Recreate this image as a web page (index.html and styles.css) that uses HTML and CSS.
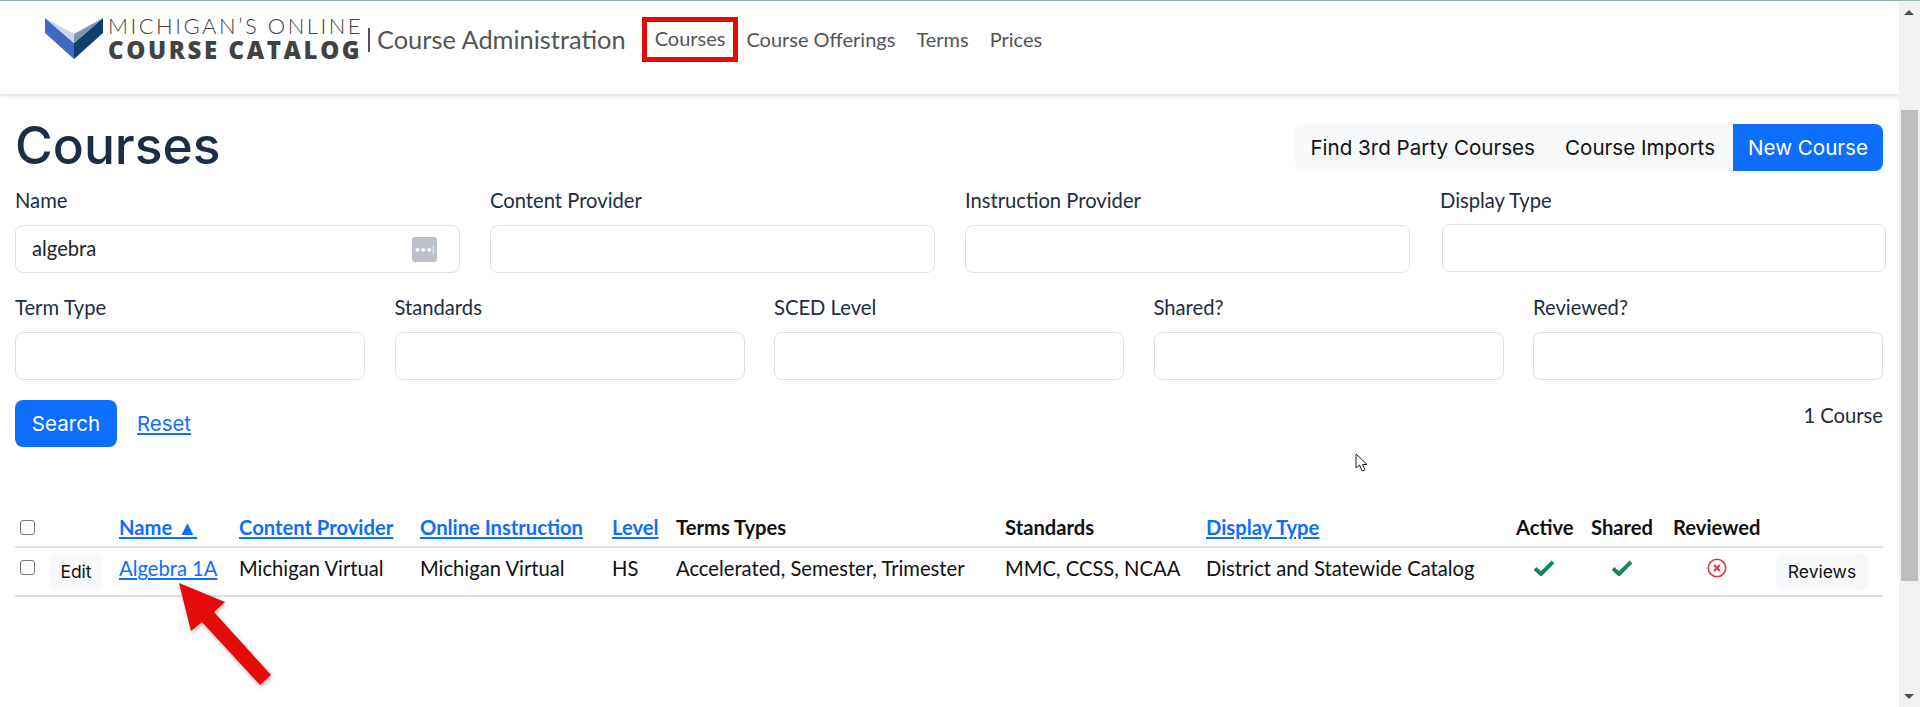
FILE: index.html
```html
<!DOCTYPE html>
<html>

<head>
    <meta charset="utf-8">
    <title>Courses</title>

    <link rel="stylesheet" href="styles.css">
</head>

<body>

    <div class="app">
        <div class="main">
            <header class="navbar">
                <a class="logo" href="#">
                    <svg class="logo-mark" width="58" height="41" viewBox="0 0 58 41">
                        <polygon points="0,0 29,25 29,41 0,15" fill="#4169c0" />
                        <polygon points="58,0 29,25 29,41 58,15" fill="#113f6d" />
                        <polygon points="0,0 29,25 29,16" fill="#c9d6f4" />
                        <polygon points="58,0 29,25 29,16" fill="#7d95b5" />
                    </svg>
                    <span class="logo-text">
                        <span class="logo-top">MICHIGAN’S ONLINE</span>
                        <span class="logo-bottom">COURSE CATALOG</span>
                    </span>
                </a>
                <span class="brand-divider"></span>
                <span class="brand-title">Course Administration</span>
                <nav class="nav">
                    <a class="nav-link nav-link-marked" href="#">Courses</a>
                    <a class="nav-link" href="#">Course Offerings</a>
                    <a class="nav-link" href="#">Terms</a>
                    <a class="nav-link" href="#">Prices</a>
                </nav>
            </header>

            <div class="content">
                <div class="title-row">
                    <h1>Courses</h1>
                    <div class="actions">
                        <a class="action" href="#">Find 3rd Party Courses</a>
                        <a class="action action-imports" href="#">Course Imports</a>
                        <a class="action action-primary" href="#">New Course</a>
                    </div>
                </div>

                <form class="filters filters-4">
                    <div class="field">
                        <label>Name</label>
                        <div class="input">algebra<span class="pass-icon">•••|</span></div>
                    </div>
                    <div class="field">
                        <label>Content Provider</label>
                        <div class="input"></div>
                    </div>
                    <div class="field">
                        <label>Instruction Provider</label>
                        <div class="input"></div>
                    </div>
                    <div class="field field-shifted">
                        <label>Display Type</label>
                        <div class="input"></div>
                    </div>
                </form>

                <form class="filters filters-5">
                    <div class="field">
                        <label>Term Type</label>
                        <div class="input"></div>
                    </div>
                    <div class="field">
                        <label>Standards</label>
                        <div class="input"></div>
                    </div>
                    <div class="field">
                        <label>SCED Level</label>
                        <div class="input"></div>
                    </div>
                    <div class="field">
                        <label>Shared?</label>
                        <div class="input"></div>
                    </div>
                    <div class="field">
                        <label>Reviewed?</label>
                        <div class="input"></div>
                    </div>
                </form>

                <div class="search-row">
                    <a class="btn-search" href="#">Search</a>
                    <a class="reset" href="#">Reset</a>
                    <span class="count">1 Course</span>
                </div>

                <table class="courses">
                    <colgroup>
                        <col class="c-check">
                        <col class="c-edit">
                        <col class="c-name">
                        <col class="c-content">
                        <col class="c-online">
                        <col class="c-level">
                        <col class="c-terms">
                        <col class="c-standards">
                        <col class="c-display">
                        <col class="c-active">
                        <col class="c-shared">
                        <col class="c-reviewed">
                        <col class="c-reviews">
                    </colgroup>
                    <thead>
                        <tr>
                            <th><span class="check"></span></th>
                            <th></th>
                            <th><a href="#">Name ▲</a></th>
                            <th><a href="#">Content Provider</a></th>
                            <th><a href="#">Online Instruction</a></th>
                            <th><a href="#">Level</a></th>
                            <th>Terms Types</th>
                            <th>Standards</th>
                            <th><a href="#">Display Type</a></th>
                            <th>Active</th>
                            <th>Shared</th>
                            <th>Reviewed</th>
                            <th></th>
                        </tr>
                    </thead>
                    <tbody>
                        <tr>
                            <td><span class="check"></span></td>
                            <td><a class="btn-light" href="#">Edit</a></td>
                            <td><a href="#">Algebra 1A</a></td>
                            <td>Michigan Virtual</td>
                            <td>Michigan Virtual</td>
                            <td>HS</td>
                            <td>Accelerated, Semester, Trimester</td>
                            <td>MMC, CCSS, NCAA</td>
                            <td>District and Statewide Catalog</td>
                            <td class="icon-active">
                                <svg width="20" height="16" viewBox="0 0 20 16">
                                    <path d="M1 8.5 L7 14 L19 2" fill="none" stroke="#198754" stroke-width="4" />
                                </svg>
                            </td>
                            <td class="icon-shared">
                                <svg width="20" height="16" viewBox="0 0 20 16">
                                    <path d="M1 8.5 L7 14 L19 2" fill="none" stroke="#198754" stroke-width="4" />
                                </svg>
                            </td>
                            <td class="icon-reviewed">
                                <svg width="20" height="20" viewBox="0 0 20 20">
                                    <circle cx="10" cy="10" r="8.7" fill="none" stroke="#dc3545" stroke-width="1.6" />
                                    <path d="M7 7 L13 13 M13 7 L7 13" stroke="#dc3545" stroke-width="2" />
                                </svg>
                            </td>
                            <td><a class="btn-light btn-reviews" href="#">Reviews</a></td>
                        </tr>
                    </tbody>
                </table>
            </div>
        </div>

        <div class="scrollbar">
            <span class="scroll-up"></span>
            <span class="scroll-thumb"></span>
            <span class="scroll-down"></span>
        </div>
    </div>

    <!-- annotations on top of the screenshot -->
    <svg class="arrow" width="110" height="120" viewBox="0 0 110 120">
        <polygon points="9,3 55,22 44,32 101,95 90,105 32,42 21,51" fill="#e60b0b" />
    </svg>
    <svg class="cursor" width="14" height="20" viewBox="0 0 14 20">
        <path d="M1 1 L1 15 L4.5 12 L7 18 L10 17 L7.5 11.5 L12 11.5 Z" fill="#fff" stroke="#223" stroke-width="1" />
    </svg>

</body>

</html>
```
FILE: styles.css
```css
html, body {
    margin: 0;
    height: 100%;
    overflow: hidden;
}

body {
    font-family: "Lato", "Liberation Sans", sans-serif;
    font-size: 20.2px;
    color: #1d2d42;
    background: #fff;
}

a {
    color: #0d6efd;
}

.app {
    display: flex;
    height: 707px;
    border-top: 1px solid #9db2b8;
    box-sizing: border-box;
}

.main {
    flex: 1;
    min-width: 0;
}

/* header */

.navbar {
    display: flex;
    align-items: flex-start;
    height: 93px;
    box-sizing: border-box;
    padding: 13px 0 0 45px;
    background: #fff;
    box-shadow: 0 1px 4px rgba(60, 60, 100, 0.25);
}

.logo {
    display: flex;
    text-decoration: none;
}

.logo-mark {
    margin-top: 4px;
}

.logo-text {
    display: flex;
    flex-direction: column;
    width: 253px;
    margin-left: 5px;
    color: #424242;
    white-space: nowrap;
}

.logo-top {
    font-size: 22px;
    font-weight: 300;
    line-height: 24px;
    letter-spacing: 2.5px;
}

.logo-bottom {
    font-family: "Open Sans", sans-serif;
    font-size: 24px;
    font-weight: 800;
    line-height: 24px;
    letter-spacing: 2.6px;
}

.brand-divider {
    width: 2px;
    height: 24px;
    margin: 14px 0 0 7px;
    background: #555;
}

.brand-title {
    margin: 2px 0 0 7px;
    font-size: 25.4px;
    line-height: 46px;
    color: #555;
}

.nav {
    display: flex;
    align-items: center;
    height: 45px;
    margin: 3px 0 0 16px;
}

.nav-link {
    margin-right: 21px;
    padding-bottom: 2px;
    font-size: 20px;
    color: #555;
    text-decoration: none;
}

.nav-link-marked {
    margin-right: 8px;
    padding: 4px 8px 7px;
    border: 5px solid #e60b0b;
}

/* title and actions */

.content {
    padding: 0 16px 0 15px;
}

.title-row {
    display: flex;
    justify-content: space-between;
    align-items: flex-start;
    height: 92px;
}

h1 {
    margin: 21px 0 0;
    font-family: "Inter", sans-serif;
    font-size: 51.5px;
    line-height: 60px;
    font-weight: 500;
    color: #1b2e45;
}

.actions {
    display: flex;
    margin: 30px 0 0;
    background: #f8f9fa;
    border-radius: 8px;
    overflow: hidden;
}

.action {
    padding: 0 15px;
    font-family: "Inter", sans-serif;
    font-size: 20.6px;
    line-height: 47px;
    color: #111;
    text-decoration: none;
}

.action-imports {
    padding-right: 18px;
}

.action-primary {
    background: #0d6efd;
    color: #fff;
}

/* filters */

.filters {
    display: grid;
    margin-bottom: 20px;
}

.filters-4 {
    grid-template-columns: repeat(4, 445px);
    column-gap: 30px;
}

.filters-5 {
    grid-template-columns: repeat(5, 1fr);
    column-gap: 29.5px;
}

.field label {
    display: block;
    height: 39px;
    line-height: 28px;
}

.input {
    display: flex;
    align-items: center;
    justify-content: space-between;
    height: 48px;
    box-sizing: border-box;
    padding: 0 22px 2px 16px;
    border: 1px solid #dee2e6;
    border-radius: 8px;
    color: #212529;
}

.field-shifted .input {
    margin: -1px -1px 1px 2px;
}

.pass-icon {
    width: 25px;
    height: 25px;
    margin-top: 2px;
    border-radius: 3px;
    background: #bbc0cb;
    color: #fff;
    font-size: 10px;
    line-height: 25px;
    text-align: center;
}

/* search row */

.search-row {
    display: flex;
    align-items: flex-start;
    height: 108px;
}

.btn-search {
    width: 102px;
    height: 47px;
    border-radius: 8px;
    background: #0d6efd;
    color: #fff;
    font-family: "Inter", sans-serif;
    font-size: 20.6px;
    line-height: 47px;
    text-align: center;
    text-decoration: none;
}

.reset {
    margin: 11px 0 0 20px;
    font-family: "Inter", sans-serif;
    font-size: 20.4px;
}

.count {
    margin: 3px 0 0 auto;
}

/* table */

.courses {
    width: 1868px;
    table-layout: fixed;
    border-collapse: collapse;
}

.c-check { width: 26px; }
.c-edit { width: 70px; }
.c-name { width: 120px; }
.c-content { width: 181px; }
.c-online { width: 192px; }
.c-level { width: 64px; }
.c-terms { width: 329px; }
.c-standards { width: 201px; }
.c-display { width: 310px; }
.c-active { width: 75px; }
.c-shared { width: 82px; }
.c-reviewed { width: 103px; }
.c-reviews { width: 115px; }

.courses th,
.courses td {
    padding: 0 8px;
    text-align: left;
    white-space: nowrap;
    color: #111;
}

.courses th {
    height: 38px;
    border-bottom: 2px solid #dee2e6;
    font-weight: 700;
}

.courses td {
    height: 47px;
    border-bottom: 2px solid #dee2e6;
    line-height: 40px;
    vertical-align: top;
}

.courses th:first-child,
.courses td:first-child {
    padding-left: 5px;
}

.check {
    display: block;
    width: 13px;
    height: 13px;
    border: 1px solid #777;
    border-radius: 3px;
}

.courses td:first-child .check {
    margin-top: 12px;
}

.btn-light {
    display: block;
    width: 54px;
    height: 38px;
    margin-top: 5px;
    border-radius: 6px;
    background: #f8f9fa;
    color: #111;
    font-family: "Inter", sans-serif;
    font-size: 17.5px;
    line-height: 38px;
    text-align: center;
    text-decoration: none;
}

.btn-reviews {
    width: 92px;
}

.courses td svg {
    display: block;
    margin-top: 12px;
}

.icon-active svg {
    margin-left: 18px;
}

.icon-shared svg {
    margin-left: 21px;
}

.courses td.icon-reviewed svg {
    margin: 10px 0 0 34px;
}

/* scrollbar */

.scrollbar {
    position: relative;
    flex: 0 0 21px;
    background: #f1f1f1;
}

.scroll-up,
.scroll-down {
    position: absolute;
    left: 5px;
    border-left: 5px solid transparent;
    border-right: 5px solid transparent;
}

.scroll-up {
    top: 9px;
    border-bottom: 5px solid #505050;
}

.scroll-down {
    bottom: 8px;
    border-top: 5px solid #505050;
}

.scroll-thumb {
    position: absolute;
    top: 109px;
    left: 2px;
    width: 17px;
    height: 471px;
    background: #bdbdbd;
}

/* annotations */

.arrow {
    position: absolute;
    left: 170px;
    top: 580px;
    filter: drop-shadow(1px 2px 2px rgba(0, 0, 0, 0.3));
}

.cursor {
    position: absolute;
    left: 1355px;
    top: 453px;
}
```
